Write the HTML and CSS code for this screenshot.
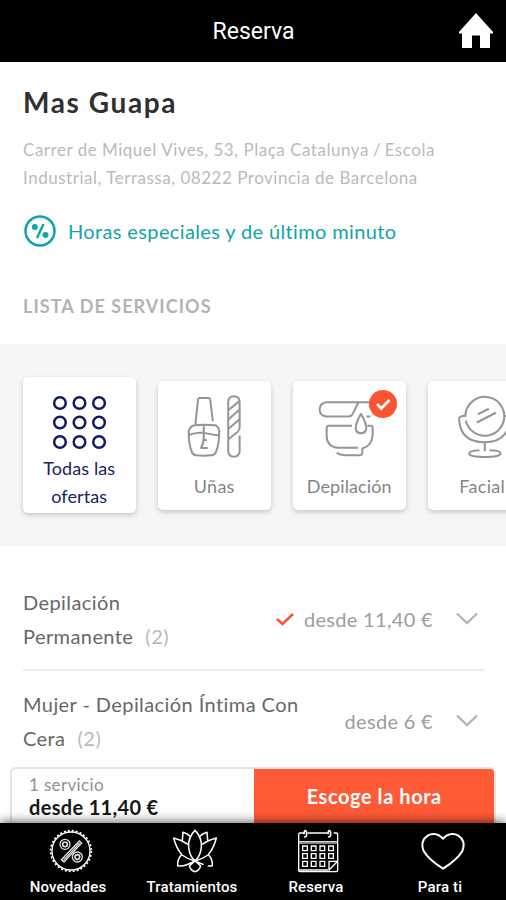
FILE: index.html
```html
<!DOCTYPE html>
<html lang="es">
<head>
<meta charset="utf-8">
<title>Reserva</title>
<link rel="stylesheet" href="styles.css">
</head>
<body>
<div class="app">
  <header class="topbar">
    <span></span>
    <h1 class="topbar-title">Reserva</h1>
    <svg class="home" viewBox="0 0 34 36"><path fill="#fff" d="M17 0 34 19v1.500h-3V35H21V22.500h-8V35H3V20.500H0V19z"/></svg>
  </header>

  <section class="salon">
    <h2 class="salon-name">Mas Guapa</h2>
    <p class="address"><span>Carrer de Miquel Vives, 53, Plaça Catalunya<span class="slash"> / </span>Escola</span><br><span>Industrial, Terrassa, 08222 Provincia de Barcelona</span></p>
    <div class="promo">
      <svg class="promo-icon" viewBox="0 0 32 32"><g fill="none" stroke="#12a4a7"><circle cx="16" cy="16" r="14.500" stroke-width="2.500"/><path d="M19.500 9l-6.500 14" stroke-width="2.400"/></g><g fill="#12a4a7"><circle cx="10.800" cy="12" r="3"/><circle cx="21.500" cy="20" r="3"/></g></svg>
      <span class="promo-text">Horas especiales y de último minuto</span>
    </div>
    <h3 class="list-title">LISTA DE SERVICIOS</h3>
  </section>

  <section class="categories">
    <div class="card card-active">
      <svg class="ico-all" viewBox="155 105 166 164"><g fill="none" stroke="#101b60" stroke-width="7.500"><circle cx="179" cy="128" r="17.500"/><circle cx="238" cy="128" r="17.500"/><circle cx="297" cy="128" r="17.500"/><circle cx="179" cy="187" r="17.500"/><circle cx="238" cy="187" r="17.500"/><circle cx="297" cy="187" r="17.500"/><circle cx="179" cy="246" r="17.500"/><circle cx="238" cy="246" r="17.500"/><circle cx="297" cy="246" r="17.500"/></g></svg>
      <span class="label-all">Todas las<br>ofertas</span>
    </div>
    <div class="card">
      <svg class="ico" viewBox="555 100 170 200"><g class="line">
        <path d="M583 193 591 119q1-4 5-4h25q5 0 6 4l8 65"/>
        <path d="M580 196q28-3 61 0 11 3 13 16 1 38-9 62-4 11-15 12-24 2-46 0-9-1-12-11-10-26-9-60 2-15 17-19z"/>
        <path d="M564 226q20-10 44-7 25 5 46 8M608 197v30q0 22-8 37h20M608 240h9"/>
        <path d="M681 238V126q1-16 17-16t17 16v77q0 8-7 14l-27 21"/>
        <path d="M715 227v48q-2 15-17 15t-17-15v-37M682 151l31-26M682 178l33-29M682 207l33-29"/>
      </g></svg>
      <span class="label">Uñas</span>
    </div>
    <div class="card">
      <svg class="ico ico-wax" viewBox="140 100 180 200"><g class="line">
        <path d="M315 127H169q-21 2-21 22t21 21h65q9 0 13-8l17-34M288 170h12"/>
        <path d="M272 162q-16 28-16 44 2 14 16 14t16-14q0-16-16-44z"/>
        <path d="M245 198h-71q-5 0-5 6v25q0 31 35 35h59M291 198h10q6 0 6 7v19q-1 34-31 42v15q-1 5-7 5h-45q-16 0-25-7"/>
      </g></svg>
      <span class="label label-wax">Depilación</span>
      <span class="badge"><svg viewBox="0 0 28 28"><path d="M8 14l4.300 4.500L20.500 10" fill="none" stroke="#fff" stroke-width="2.800"/></svg></span>
    </div>
    <div class="card">
      <svg class="ico" viewBox="557 100 170 200"><g class="line">
        <path d="M585 171a58 58 0 1 1 22 44q-16-12-21-33"/>
        <path d="M584 168q-19 1-18 10 4 69 76 69 70 0 76-69 0-9-18-10M643 247v27M627 271q-31 1-31 10 3 10 47 10t47-10q0-10-33-10"/>
        <path d="M622 164l33-17M619 188l57-29"/>
      </g></svg>
      <span class="label label-face">Facial</span>
    </div>
  </section>

  <section class="services">
    <div class="service">
      <div class="service-name"><span>Depilación</span><br><span>Permanente</span><span class="count">(2)</span></div>
      <div class="service-price">
        <svg class="tick" viewBox="0 0 18 14"><path d="M1 7l5.500 5L17 2" fill="none" stroke="#ff5130" stroke-width="2.500"/></svg>
        <span>desde 11,40 €</span>
        <svg class="chev" viewBox="0 0 22 13"><path d="M1 1.500 11 11 21 1.500" fill="none" stroke="#b5b5b5" stroke-width="2.400"/></svg>
      </div>
    </div>
    <div class="service">
      <div class="service-name"><span>Mujer - Depilación Íntima Con</span><br><span>Cera</span><span class="count">(2)</span></div>
      <div class="service-price">
        <span>desde 6 €</span>
        <svg class="chev" viewBox="0 0 22 13"><path d="M1 1.500 11 11 21 1.500" fill="none" stroke="#b5b5b5" stroke-width="2.400"/></svg>
      </div>
    </div>
  </section>

  <footer class="footer">
    <div class="booking">
      <div class="summary"><span class="sum-count">1 servicio</span><strong class="sum-price">desde 11,40 €</strong></div>
      <div class="cta"><span>Escoge la hora</span></div>
    </div>
    <nav class="nav">
      <div class="nav-item">
        <svg class="nav-ico" viewBox="0 0 132 132"><g fill="none" stroke="#fff" stroke-width="4"><circle cx="66" cy="66" r="57"/><circle cx="66" cy="66" r="61" stroke-width="5" stroke-dasharray="6 6"/><g stroke="#ddd"><circle cx="48" cy="46" r="15"/><circle cx="48" cy="46" r="7" stroke-width="5"/><circle cx="85" cy="84" r="15"/><circle cx="85" cy="84" r="7" stroke-width="5"/><path d="M91 36 98 42 45 99 37 92z"/><path d="M92 42 43 94" stroke-width="4"/></g></g></svg>
        <span>Novedades</span>
      </div>
      <div class="nav-item">
        <svg class="nav-ico" viewBox="0 0 132 132"><g fill="none" stroke="#fff" stroke-width="4.500" stroke-linejoin="round">
          <path d="M66 4Q45 24 47 55q3 28 19 40 16-12 19-40Q87 24 66 4z"/>
          <path d="M66 96Q43 90 27 78 9 56 2 27q23 5 44 20M66 96q23-6 39-18 18-22 25-51-23 5-44 20"/>
          <path d="M28 34 30 10q14 4 23 13M104 34l-2-24q-14 4-23 13"/>
          <path d="M25 78q-12 13-11 32 13 3 25-2 14-5 27-12M107 78q12 13 11 32-7 2-14 1M92 107q-12-5-26-11M66 96 49 111q5 15 17 17 12-2 17-17z"/>
        </g></svg>
        <span>Tratamientos</span>
      </div>
      <div class="nav-item">
        <svg class="nav-ico nav-cal" viewBox="0 0 132 132"><g fill="none" stroke="#fff" stroke-width="4">
          <path d="M24 12H12q-4 0-4 5v107q0 4 4 4h109q4 0 4-4V17q0-5-4-5h-8M35 12h60"/><path d="M8 42h117M8 38h117" stroke-width="3"/><path d="M24 24q8 1 8-8 0-11-4-11t-4 11M96 24q8 1 8-8 0-11-4-11t-4 11" stroke-width="5"/>
          <path d="M20 51h14v14H20zM46 51h14v14H46zM72 51h14v14H72zM98 51h14v14H98zM20 74h14v14H20zM46 74h14v14H46zM72 74h14v14H72zM98 74h14v14H98zM20 97h14v15H20zM46 97h14v15H46zM72 97h14v15H72zM125 97H99v30M99 123l26-26M8 123h88"/>
        </g></svg>
        <span>Reserva</span>
      </div>
      <div class="nav-item">
        <svg class="nav-ico" viewBox="0 0 132 132"><path d="M66 119Q23 92 8 66C-10 24 39-3 66 29 93-3 142 24 124 66 109 92 66 119 66 119z" fill="none" stroke="#fff" stroke-width="6"/></svg>
        <span>Para ti</span>
      </div>
    </nav>
  </footer>
</div>
</body>
</html>
```
FILE: styles.css
```css
* { box-sizing: border-box; }
body { margin: 0; font-family: Lato, "Liberation Sans", sans-serif; background: #fff; }
h1, h2, h3, p { margin: 0; font-weight: 400; }
svg { display: block; flex: none; }
span { white-space: nowrap; }
.app { height: 900px; overflow: hidden; position: relative; }
.topbar { height: 62px; background: #000; color: #fff; display: grid; grid-template-columns: 1fr auto 1fr; align-items: center; padding: 0 13px 0 14px; }
.topbar-title { font: 400 23px/30px Roboto, sans-serif; padding-top: 1px; }
.home { width: 34px; height: 36px; justify-self: end; }
.salon { height: 282px; padding: 22px 23px 0; }
.salon-name { font-size: 28px; line-height: 36px; font-weight: 700; color: #303030; letter-spacing: 1.600px; }
.address { margin-top: 16px; font-size: 17px; line-height: 28px; color: #bababa; letter-spacing: .52px; }
.slash { letter-spacing: -.2px; }
.promo { display: flex; align-items: center; gap: 13px; margin-top: 23px; height: 32px; color: #12a4a7; font-size: 20px; letter-spacing: .37px; }
.promo-icon { width: 32px; height: 32px; margin-left: .5px; margin-right: -.5px; }
.list-title { margin-top: 47px; font-size: 18px; line-height: 24px; font-weight: 700; color: #b3b3b3; letter-spacing: 1.050px; }
.categories { height: 202px; background: #f6f6f6; display: flex; gap: 21.500px; padding: 37px 0 0 22.500px; overflow: hidden; }
.card { position: relative; flex: none; width: 113.500px; height: 129px; background: #fff; border-radius: 5px; box-shadow: 0 2px 5px rgba(0,0,0,.2); display: flex; flex-direction: column; align-items: center; padding-top: 12px; color: #858585; }
.card-active { height: 136px; margin-top: -4px; padding-top: 18px; color: #172263; }
.ico-all { width: 55px; height: 55px; }
.label-all { margin-top: 4px; font-size: 18px; line-height: 28px; text-align: center; letter-spacing: .1px; }
.ico { width: 57px; height: 67px; }
.ico-wax { width: 60px; margin-left: -5px; }
.line { fill: none; stroke: #959595; stroke-width: 6px; stroke-linejoin: round; }
.label { margin-top: 13px; font-size: 18px; line-height: 26px; letter-spacing: .3px; }
.label-wax { letter-spacing: .1px; }
.label-face { letter-spacing: .3px; margin-right: 4px; }
.badge { position: absolute; top: 9px; right: 9px; width: 28px; height: 28px; border-radius: 50%; background: #fc5430; }
.services { padding: 39px 22px 0 23px; }
.service { display: flex; justify-content: space-between; align-items: center; height: 86px; padding-bottom: 17px; border-bottom: 2px solid #ececec; }
.service + .service { margin-top: 15px; border-bottom: 0; }
.service-name { font-size: 20px; line-height: 34px; color: #676767; letter-spacing: .42px; }
.count { margin-left: 12px; color: #b9b9b9; letter-spacing: .5px; }
.service-price { display: flex; align-items: center; color: #9d9d9d; font-size: 20px; padding-right: 6px; letter-spacing: .32px; }
.tick { width: 18px; height: 14px; margin-right: 10px; }
.chev { width: 22px; height: 13px; margin-left: 23px; }
.footer { position: absolute; left: 0; right: 0; bottom: 0; }
.booking { display: flex; height: 56px; margin: 0 10px; border: 2px solid #e4e4e4; border-bottom: 0; border-radius: 6px 6px 0 0; background: #fff; overflow: hidden; }
.summary { width: 241.500px; padding: 5px 0 0 17px; display: flex; flex-direction: column; }
.sum-count { font-size: 17px; line-height: 22px; color: #929292; letter-spacing: .35px; }
.sum-price { font-size: 20px; line-height: 23px; color: #171717; white-space: nowrap; letter-spacing: .33px; }
.cta { flex: 1; display: flex; align-items: center; justify-content: center; background: #ff5a36; color: #fff; font-size: 20px; padding-left: 1px; font-weight: 700; letter-spacing: .57px; }
.nav { position: relative; height: 77px; background: #000; box-shadow: 0 -1px 10px rgba(0,0,0,.65); display: grid; grid-template-columns: 124px 124px 124px 124px; padding-left: 6px; color: #fff; font: 500 15px/20px Roboto, sans-serif; letter-spacing: .15px; }
.nav-item { display: flex; flex-direction: column; align-items: center; padding-top: 6px; }
.nav-ico { width: 44px; height: 44px; margin-left: 5px; }
.nav-cal { margin-left: 4px; }
.nav-item span { margin-top: 4px; }
```
